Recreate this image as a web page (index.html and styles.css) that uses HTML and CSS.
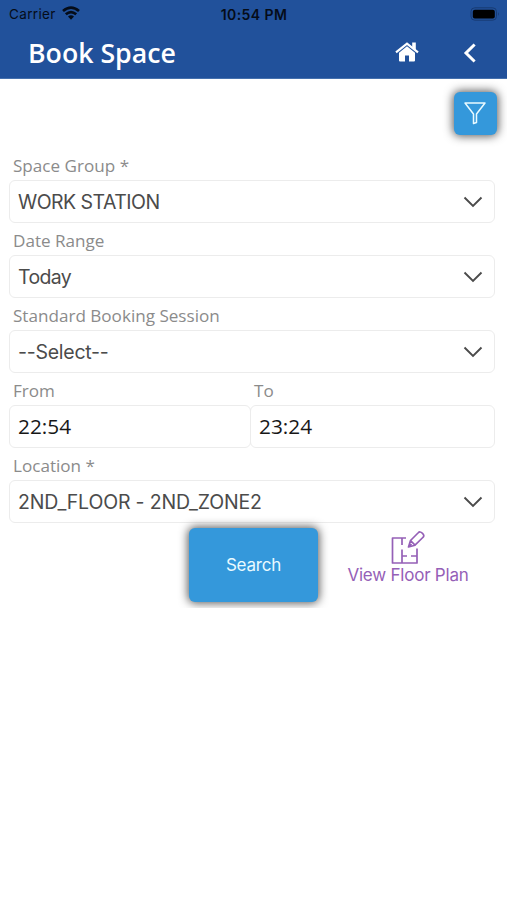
FILE: index.html
```html
<!DOCTYPE html>
<html lang="en">
<head>
<meta charset="utf-8">
<meta name="viewport" content="width=device-width, initial-scale=1">
<title>Book Space</title>
<link rel="stylesheet" href="styles.css">
</head>
<body>
<header class="header">
  <div class="status">
    <div class="carrier"><span>Carrier</span>
      <svg width="18" height="14" viewBox="0 0 18 14" fill="none" stroke="#050c18" stroke-width="2.700"><path d="M1 5Q9-1.800 17 5M3.800 8.300Q9 3.800 14.200 8.300"/><path d="M6 10.600Q9 8 12 10.600L9 13.800Z" fill="#050c18" stroke="none"/></svg>
    </div>
    <div class="clock">10:54 PM</div>
    <svg class="battery" width="30" height="14" viewBox="0 0 30 14"><rect x="1" y=".8" width="25.500" height="12.400" rx="3.800" fill="none" stroke="#183b73"/><rect x="2.800" y="2.700" width="22" height="8.700" rx="2" fill="#000"/><path d="M28 5Q29.700 7 28 9Z" fill="#183b73"/></svg>
  </div>
  <div class="navbar">
    <h1>Book Space</h1>
    <svg class="home" width="24" height="20" viewBox="0 0 24 20"><path d="M1 10.400 12 1.600 23 10.400" fill="none" stroke="#fff" stroke-width="2.200"/><path d="M17.200 .500H20.800V8.500L17.200 5.500ZM12 4.300 20 10.800V18.500Q20 19.500 19 19.500H14V13.500H10V19.500H5Q4 19.500 4 18.500V10.800Z" fill="#fff"/></svg>
    <svg class="back" width="14" height="20" viewBox="0 0 14 20"><path d="M11.600 1.500 3 10 11.600 18.500" fill="none" stroke="#fff" stroke-width="3"/></svg>
  </div>
</header>
<main>
  <div class="toolbar"><button class="filter" aria-label="Filter"><svg width="24" height="24" viewBox="0 0 24 24" fill="none" stroke="#e9faff" stroke-width="1.500" stroke-linejoin="round"><path d="M2 2H22L13.500 13V21.500L10.500 22.500V13Z"/></svg></button></div>
  <div class="field"><label>Space Group *</label><div class="box"><span class="work">WORK STATION</span><svg class="chevron" width="20" height="12" viewBox="0 0 20 12"><path d="M1.500 1.500 10 10 18.500 1.500"/></svg></div></div>
  <div class="field"><label>Date Range</label><div class="box"><span class="today">Today</span><svg class="chevron" width="20" height="12" viewBox="0 0 20 12"><path d="M1.500 1.500 10 10 18.500 1.500"/></svg></div></div>
  <div class="field"><label>Standard Booking Session</label><div class="box"><span class="select">--Select--</span><svg class="chevron" width="20" height="12" viewBox="0 0 20 12"><path d="M1.500 1.500 10 10 18.500 1.500"/></svg></div></div>
  <div class="times">
    <div class="field"><label>From</label><div class="box time"><span>22:54</span></div></div>
    <div class="field"><label>To</label><div class="box time"><span>23:24</span></div></div>
  </div>
  <div class="field"><label>Location *</label><div class="box"><span class="location">2ND_FLOOR - 2ND_ZONE2</span><svg class="chevron" width="20" height="12" viewBox="0 0 20 12"><path d="M1.500 1.500 10 10 18.500 1.500"/></svg></div></div>
  <div class="actions">
    <button class="search">Search</button>
    <div class="plan">
      <svg width="34" height="34" viewBox="0 0 34 34" fill="none" stroke="#9560b7" stroke-width="1.700" stroke-linejoin="round"><path d="M15 7H1.500V32H26V17.500M11 7V14M11 18.500V32M11 25H16M20 25H26"/><path d="M17.500 16 19.500 9.500 27 2Q29-.200 31.500 2.300T31.800 6.500L24 14.200ZM19.500 9.500 24 14.200M17.500 16 20.500 13"/></svg>
      <span>View Floor Plan</span>
    </div>
  </div>
</main>
</body>
</html>
```
FILE: styles.css
```css
* { box-sizing: border-box; }
body { margin: 0; background: #fff; font-family: "Open Sans", sans-serif; }
.header { height: 79px; background: #21519b; border-bottom: 1px solid #4570ad; }
.status { height: 28px; display: grid; grid-template-columns: 1fr auto 1fr; align-items: center; padding: 0 7px 0 9px; font-family: Inter, sans-serif; color: #050c18; }
.carrier { display: flex; align-items: center; gap: 6px; font-size: 13.500px; letter-spacing: .35px; }
.carrier svg { margin-top: -2px; }
.clock { font-size: 14px; font-weight: 600; letter-spacing: .4px; margin-left: -1px; }
.battery { justify-self: end; margin-top: -1px; }
.navbar { height: 50px; display: flex; align-items: center; padding: 0 30px 0 28px; }
h1 { margin: 0; flex: 1; color: #fff; font-size: 26.700px; line-height: 36px; font-weight: 600; }
.home { margin: -2px 44px 0 0; }
.back { margin-top: -1px; }
main { padding: 13px 12px 0 9px; }
.toolbar { height: 62px; display: flex; justify-content: flex-end; margin-right: -2px; }
button { border: 0; padding: 0; background: #3498db; color: #e9faff; border-radius: 6px; }
.filter { width: 43px; height: 43px; display: flex; align-items: center; justify-content: center; box-shadow: 0 0 10px 1px #555; }
.filter svg { margin: -2px 1px 0 0; }
.field { height: 75px; }
label { display: block; height: 26px; padding-left: 4px; font-size: 17.100px; line-height: 24px; color: #8b8b8b; white-space: nowrap; }
.box { height: 43px; display: flex; align-items: center; justify-content: space-between; border: 1px solid #ececec; border-radius: 6px; padding: 0 11px 0 8px; font-family: Inter, sans-serif; font-size: 19.500px; color: #4b4b4b; white-space: nowrap; }
.work { letter-spacing: -.53px; }
.today { letter-spacing: -.65px; }
.select { letter-spacing: -.25px; }
.location { letter-spacing: -.17px; }
.chevron { fill: none; stroke: #4b4b4b; stroke-width: 1.900; }
.times { display: grid; grid-template-columns: 241px 1fr; }
.times .box { margin-right: -1px; }
.times .field:last-child .box { margin-right: 0; }
.time { font-family: "Open Sans", sans-serif; font-size: 20.800px; color: #171717; }
.time span { margin-top: -1px; }
.actions { height: 80px; margin-top: -1px; display: flex; padding-left: 180px; }
.search { width: 129px; height: 74px; font: 17px Inter, sans-serif; letter-spacing: -.2px; box-shadow: 0 0 10px 1px #555; }
.plan { width: 122px; margin-left: 29px; padding-top: 3px; display: flex; flex-direction: column; align-items: center; color: #9560b7; font: 17px/20px Inter, sans-serif; letter-spacing: -.22px; white-space: nowrap; }
```
